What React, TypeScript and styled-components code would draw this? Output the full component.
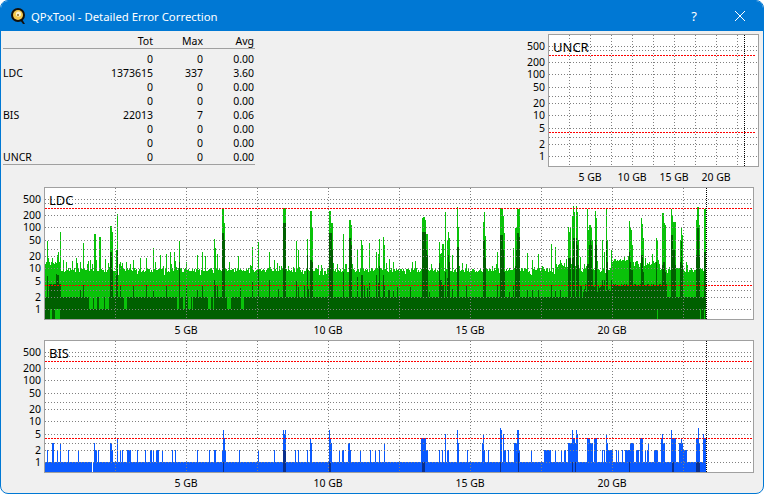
import React from "react";
import styled, { createGlobalStyle } from "styled-components";

const GlobalStyle = createGlobalStyle`
  html, body {
    margin: 0;
    padding: 0;
    background: #ffffff;
  }
`;

const Window = styled.div`
  box-sizing: border-box;
  width: 764px;
  height: 494px;
  display: flex;
  flex-direction: column;
  overflow: hidden;
  background: #f0f0f0;
  border: 1px solid #0078d4;
  border-radius: 8px;
  font-family: "Noto Sans", "Liberation Sans", sans-serif;
`;

const TitleBar = styled.div`
  height: 30px;
  flex: none;
  display: flex;
  align-items: center;
  padding-left: 9px;
  background: #0078d4;
  color: #ffffff;
`;

const TitleText = styled.div`
  margin-left: 4px;
  font-size: 11.35px;
  flex: 1;
`;

const TitleButton = styled.button`
  width: 46px;
  height: 30px;
  padding: 0;
  border: 0;
  background: none;
  color: #ffffff;
  font: 13px "Noto Sans", sans-serif;
  display: flex;
  align-items: center;
  justify-content: center;
`;

const TopRow = styled.div`
  display: flex;
  justify-content: space-between;
  margin: 2px 3px 0 2px;
`;

const StatsTable = styled.div`
  width: 252px;
  margin-top: 1px;
  font-size: 10.5px;
  color: #000000;
`;

const StatsRow = styled.div<{ $head?: boolean }>`
  display: grid;
  grid-template-columns: 30px 120px 50px 51px;
  height: 14px;
  line-height: 14px;
  ${(p) => p.$head && "height: 14px; border-bottom: 1px solid #a0a0a0; margin-bottom: 3px;"}
`;

const StatsRows = styled.div`
  border-bottom: 1px solid #a0a0a0;
`;

const Num = styled.div`
  text-align: right;
`;

const ChartSvg = styled.svg`
  display: block;
  flex: none;
  font-family: "Noto Sans", "Liberation Sans", sans-serif;
`;

const BottomChart = styled.div`
  margin-left: 15px;
`;

const PLOT_H = 131;
const AXIS_W = 28;

const yOf = (v: number) => 121.3 - 41 * Math.log10(v);
const rowOf = (v: number) => Math.round(yOf(v));

const LEVELS = [1, 2, 3, 5, 10, 20, 30, 50, 100, 200, 400, 500];
const YLABELS = [1, 2, 5, 10, 20, 50, 100, 200, 500];

// dotted lines as single pixels, so that every dot lands on the pixel grid
const hDots = (y: number, w: number, period: number, len = 1) => {
  let d = "";
  for (let x = 1; x < w - len; x += period) d += `M${x} ${y}h${len}v1h-${len}z`;
  return d;
};

const vDots = (x: number, h: number, period: number) => {
  let d = "";
  for (let y = 0; y < h; y += period) d += `M${x} ${y}h1v1h-1z`;
  return d;
};

type ChartProps = {
  title: string;
  plotW: number;
  step: number;
  endX: number;
  children?: React.ReactNode;
};

const Chart = ({ title, plotW, step, endX, children }: ChartProps) => {
  let grid = "";
  LEVELS.forEach((v) => {
    grid += hDots(rowOf(v), plotW, 3);
  });
  for (let x = step; x < plotW; x += step) grid += vDots(x, PLOT_H, 3);
  const red = hDots(rowOf(300), plotW, 3, 2) + hDots(rowOf(4), plotW, 3, 2);
  return (
    <ChartSvg width={AXIS_W + plotW + 2} height={153}>
      <rect x={AXIS_W + 0.5} y={1.5} width={plotW} height={PLOT_H + 1} fill="#ffffff" stroke="#a0a0a0" />
      <g transform={`translate(${AXIS_W} 2)`} shapeRendering="crispEdges">
        {children}
        <path d={grid} fill="#808080" />
        <path d={red} fill="#ff0000" />
        <path d={vDots(endX, PLOT_H, 2)} fill="#000000" />
      </g>
      <text x={AXIS_W + 5} y={14} fontSize={13} fill="#000000" dominantBaseline="central">{title}</text>
      <g fontSize={10.5} fill="#000000">
        {YLABELS.map((v) => (
          <text key={v} x={25} y={2 + yOf(v)} textAnchor="end" dominantBaseline="central">{v}</text>
        ))}
        {[5, 10, 15, 20].map((gb, i) => (
          <text key={gb} x={AXIS_W + step * 2 * (i + 1)} y={144} textAnchor="middle" dominantBaseline="central">
            {gb} GB
          </text>
        ))}
      </g>
    </ChartSvg>
  );
};

// page x of the plot's left edge in the two wide charts
const X0 = 44;
const LAST = 705;

const makeRand = (seed: number) => () => {
  seed = (seed * 1664525 + 1013904223) % 4294967296;
  return seed / 4294967296;
};

// x, top y of the light bar, top y of the dark bar (page coordinates of the LDC chart)
const LDC_SPIKES: number[][] = [
  [47, 241, 276], [48, 258, 297], [52, 258, 285], [57, 255, 275], [58, 252, 275], [60, 232, 284], [63, 260, 297], [66, 262, 297],
  [72, 261, 297], [76, 258, 297], [80, 262, 290], [83, 243, 285], [90, 260, 290], [94, 234, 262], [95, 234, 262], [96, 260, 285], [99, 237, 280],
  [100, 237, 297], [105, 259, 285], [110, 226, 252], [111, 226, 252], [112, 232, 270], [116, 250, 275], [117, 214, 250], [120, 262, 285],
  [126, 262, 297], [133, 260, 285], [140, 258, 297], [146, 258, 285], [153, 248, 290], [160, 255, 297], [166, 254, 285], [170, 252, 297],
  [174, 252, 297], [179, 241, 262], [186, 262, 285], [197, 255, 290], [202, 252, 285], [205, 256, 297], [214, 239, 280], [215, 248, 285], [217, 254, 285],
  [222, 208, 233], [223, 208, 233], [224, 223, 240], [229, 262, 285], [238, 256, 297], [252, 247, 281], [258, 242, 270], [269, 252, 280], [274, 260, 297],
  [283, 208, 223], [284, 208, 223], [285, 208, 223], [296, 241, 281], [298, 250, 287], [307, 239, 255], [310, 211, 260], [311, 211, 260], [312, 228, 262],
  [329, 211, 233], [330, 211, 233], [331, 223, 233], [332, 223, 250], [343, 234, 272], [349, 220, 238], [350, 220, 238], [351, 225, 245],
  [357, 250, 277], [361, 240, 275], [362, 245, 275], [369, 243, 283], [376, 252, 275], [378, 254, 283], [379, 239, 266], [383, 237, 275], [384, 245, 285], [389, 259, 290], [393, 262, 290],
  [415, 261, 297], [422, 218, 232], [423, 217, 232], [424, 217, 232], [425, 220, 232], [426, 234, 250], [427, 234, 255], [439, 242, 263], [440, 254, 280], [441, 253, 280], [442, 244, 285], [443, 244, 285],
  [445, 212, 272], [447, 240, 278], [448, 232, 255], [449, 238, 262], [452, 255, 289], [457, 207, 247], [458, 227, 247], [466, 264, 285],
  [483, 222, 240], [484, 212, 240], [485, 236, 258], [497, 252, 285], [500, 208, 235], [501, 208, 235], [502, 208, 235], [503, 216, 250], [504, 233, 272],
  [513, 248, 285], [515, 228, 266], [516, 228, 250], [517, 209, 233], [518, 209, 233], [519, 209, 237], [527, 253, 290], [532, 260, 290], [538, 254, 290],
  [551, 244, 285], [555, 247, 290], [560, 260, 290], [568, 227, 258], [569, 232, 258], [570, 228, 258], [572, 216, 258], [573, 206, 238], [574, 212, 238], [576, 206, 238], [577, 212, 245], [578, 240, 265], [580, 257, 285],
  [587, 209, 264], [588, 230, 264], [589, 225, 245], [590, 225, 240], [591, 228, 245], [592, 240, 270], [595, 211, 240], [596, 218, 245], [602, 240, 280], [604, 252, 280], [606, 208, 240], [607, 240, 262], [611, 250, 280],
  [629, 221, 252], [630, 228, 262], [631, 230, 270], [632, 245, 270], [641, 218, 255], [642, 224, 255], [643, 238, 272], [656, 238, 262], [657, 240, 285], [662, 213, 265], [663, 213, 262], [664, 223, 262], [665, 225, 272],
  [671, 209, 235], [672, 215, 235], [673, 222, 250], [674, 222, 250], [675, 222, 265], [680, 240, 262], [681, 228, 240], [682, 235, 265], [696, 220, 255], [697, 207, 228], [698, 207, 228], [699, 225, 255], [704, 209, 252], [705, 209, 252],
];

const LDC_NOTCH_TO_ONE: number[][] = [
  [89, 92], [94, 96], [99, 103], [105, 108], [124, 126], [177, 178], [183, 184], [188, 190], [192, 192], [208, 210], [213, 213], [227, 230], [241, 243],
];
const LDC_NOTCH_TO_TWO: number[][] = [[668, 670]];
const LDC_BOTTOM_LIGHT = [50, 51, 55, 56, 57, 58, 59, 657, 700, 704];

const inRanges = (x: number, ranges: number[][]) => ranges.some(([a, b]) => x >= a && x <= b);

const buildLdc = () => {
  const rand = makeRand(1373615);
  let light = "";
  let dark = "";
  const spikes = new Map(LDC_SPIKES.map((s) => [s[0], s]));
  for (let x = 45; x <= LAST; x++) {
    const r = rand();
    let raised = 0;
    if (x > 555 && x < 575) raised = 5;
    if (x >= 612 && x <= 628) raised = 10;
    if (x > 630 && x < 660) raised = 7;
    let top = 272 - raised - Math.round(rand() * 4);
    if (x >= 45 && x < 60) top = 265 - Math.round(rand() * 3);
    if (r > 0.86) top -= Math.round(rand() * 8);
    if (r < 0.07) top += 3;
    let darkTop = 297;
    if (r > 0.45 && r < 0.51) darkTop = 285 + Math.round(rand() * 8);
    if (x >= 49 && x <= 60) darkTop = x > 55 && x < 59 ? 274 : 284;
    if (x >= 583 && x <= 666) darkTop = 284 + (x < 612 ? Math.round(rand() * 8) : Math.round(rand() * 2));
    const spike = spikes.get(x);
    if (spike) {
      top = Math.min(top, spike[1]);
      darkTop = spike[2];
    }
    if (x >= 668 && x <= 670) top = Math.min(top, 270);
    const notchOne = inRanges(x, LDC_NOTCH_TO_ONE);
    if (notchOne || inRanges(x, LDC_NOTCH_TO_TWO)) darkTop = notchOne ? 309 : 297;
    const lx = x - X0;
    const ly = top - 188;
    const dy = darkTop - 188;
    light += `M${lx} ${ly}V${PLOT_H}h1V${ly}z`;
    if (LDC_BOTTOM_LIGHT.includes(x)) {
      dark += `M${lx} ${dy}V${121}h1V${dy}z`;
    } else {
      dark += `M${lx} ${dy}V${PLOT_H}h1V${dy}z`;
    }
  }
  return { light, dark };
};

// first x, last x, level
const BIS_SPIKES: number[][] = [
  [47, 47, 2], [52, 53, 3], [57, 57, 2], [60, 60, 3], [68, 68, 2], [78, 78, 2], [94, 94, 3], [95, 96, 2], [98, 98, 2], [110, 111, 3], [112, 112, 2],
  [117, 117, 4], [120, 120, 2], [122, 122, 2], [127, 130, 2], [137, 137, 2], [145, 145, 2], [150, 151, 2], [153, 153, 2], [156, 157, 2], [158, 158, 2], [162, 162, 2],
  [172, 172, 2], [175, 175, 2], [197, 197, 2], [209, 209, 2], [214, 215, 2], [222, 222, 2], [223, 223, 6], [224, 224, 4], [225, 225, 2], [239, 239, 2], [258, 258, 2],
  [274, 274, 2], [283, 283, 6], [284, 284, 5], [285, 285, 6], [295, 295, 2], [298, 298, 2], [307, 307, 2], [310, 310, 4], [311, 311, 3],
  [329, 329, 6], [330, 330, 4], [331, 331, 3], [339, 339, 2], [342, 343, 2], [348, 349, 3], [350, 350, 2], [360, 360, 2], [370, 370, 2], [375, 375, 2], [379, 379, 2], [384, 384, 3],
  [421, 425, 4], [426, 427, 2], [439, 439, 2], [442, 442, 2], [445, 445, 5], [447, 448, 2], [457, 457, 6], [458, 458, 3], [467, 467, 2],
  [482, 482, 3], [483, 483, 5], [484, 484, 2], [488, 488, 2], [500, 500, 7], [501, 501, 6], [503, 503, 5], [504, 504, 2], [505, 505, 2], [508, 508, 2],
  [514, 516, 3], [517, 518, 6], [519, 519, 2], [531, 531, 2], [544, 550, 2], [555, 555, 2], [561, 561, 2], [564, 565, 2], [568, 571, 3], [572, 572, 6], [573, 574, 4], [575, 575, 3], [576, 576, 6], [577, 577, 5],
  [587, 589, 4], [590, 592, 3], [594, 596, 4], [602, 602, 2], [604, 604, 2], [606, 606, 5], [607, 607, 3], [608, 612, 2], [616, 616, 2], [618, 618, 2], [622, 622, 2],
  [625, 629, 2], [630, 633, 3], [636, 638, 2], [640, 642, 4], [645, 645, 2], [647, 647, 2], [648, 648, 3], [654, 657, 2], [661, 661, 4], [662, 662, 5], [663, 664, 3],
  [671, 671, 6], [672, 675, 4], [679, 680, 3], [681, 681, 4], [682, 682, 3], [683, 686, 2], [696, 697, 4], [698, 698, 7], [699, 699, 3], [703, 703, 5], [704, 705, 4],
];

// first x, last x, top level of the dark stroke inside the bar
const BIS_DARK: number[][] = [
  [223, 223, 1], [283, 285, 2], [329, 330, 1], [422, 424, 1], [500, 500, 1], [518, 518, 1.7], [572, 572, 1], [575, 575, 1], [629, 629, 1], [672, 673, 1], [696, 699, 1],
];

const buildBis = () => {
  let blue = "";
  for (let x = 45; x <= LAST; x++) {
    if (x === 92) continue;
    blue += `M${x - X0} ${rowOf(1)}V${PLOT_H}h1V${rowOf(1)}z`;
  }
  BIS_SPIKES.forEach(([a, b, v]) => {
    blue += `M${a - X0} ${rowOf(v)}V${PLOT_H}H${b - X0 + 1}V${rowOf(v)}z`;
  });
  let dark = "";
  BIS_DARK.forEach(([a, b, v]) => {
    dark += `M${a - X0} ${rowOf(v)}V${PLOT_H}H${b - X0 + 1}V${rowOf(v)}z`;
  });
  return { blue, dark };
};

const ldc = buildLdc();
const bis = buildBis();

const STATS = [
  ["", "0", "0", "0.00"],
  ["LDC", "1373615", "337", "3.60"],
  ["", "0", "0", "0.00"],
  ["", "0", "0", "0.00"],
  ["BIS", "22013", "7", "0.06"],
  ["", "0", "0", "0.00"],
  ["", "0", "0", "0.00"],
  ["UNCR", "0", "0", "0.00"],
];

const Logo = () => (
  <svg width="17" height="18" viewBox="0 0 17 18">
    <path d="M10 13l3 4h2l-3-5z" fill="#101010" />
    <circle cx="8" cy="8" r="7" fill="#151008" />
    <circle cx="8" cy="8" r="5" fill="#f4c94e" />
    <circle cx="8.5" cy="7" r="2.6" fill="#fdf3d0" />
    <circle cx="8" cy="8" r="1" fill="#8a6a20" />
  </svg>
);

const App = () => {
  return (
    <>
      <GlobalStyle />
      <Window>
        <TitleBar>
          <Logo />
          <TitleText>QPxTool - Detailed Error Correction</TitleText>
          <TitleButton>?</TitleButton>
          <TitleButton>
            <svg width="12" height="12" viewBox="0 0 12 12">
              <path d="M1 1l10 10M11 1L1 11" stroke="#ffffff" strokeWidth="1" fill="none" />
            </svg>
          </TitleButton>
        </TitleBar>
        <TopRow>
          <StatsTable>
            <StatsRow $head>
              <div />
              <Num>Tot</Num>
              <Num>Max</Num>
              <Num>Avg</Num>
            </StatsRow>
            <StatsRows>
              {STATS.map((row, i) => (
                <StatsRow key={i}>
                  <div>{row[0]}</div>
                  <Num>{row[1]}</Num>
                  <Num>{row[2]}</Num>
                  <Num>{row[3]}</Num>
                </StatsRow>
              ))}
            </StatsRows>
          </StatsTable>
          <Chart title="UNCR" plotW={210} step={21} endX={196} />
        </TopRow>
        <BottomChart>
          <Chart title="LDC" plotW={709} step={71} endX={662}>
            <path d={ldc.light} fill="#0ac20a" />
            <path d={ldc.dark} fill="#006000" />
          </Chart>
        </BottomChart>
        <BottomChart>
          <Chart title="BIS" plotW={709} step={71} endX={662}>
            <path d={bis.blue} fill="#0a5aff" />
            <path d={bis.dark} fill="#0a2f8c" />
          </Chart>
        </BottomChart>
      </Window>
    </>
  );
};

export default App;
